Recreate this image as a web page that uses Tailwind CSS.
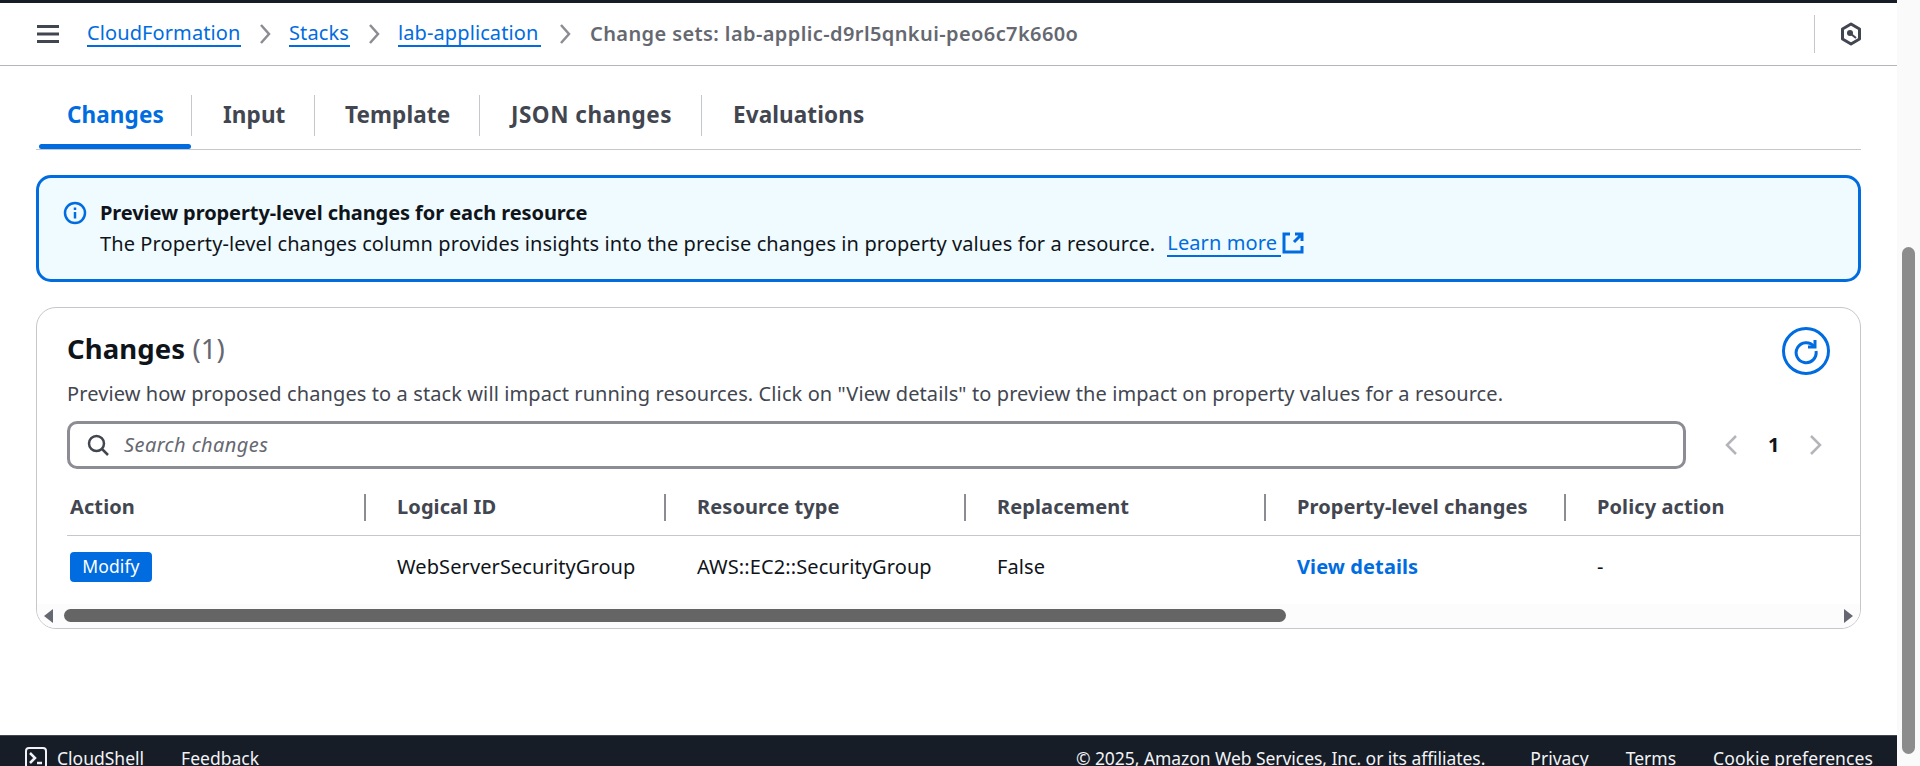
<!DOCTYPE html>
<html lang="en">
<head>
  <meta charset="UTF-8" />
  <title>Change sets - CloudFormation</title>
  <script src="https://cdn.jsdelivr.net/npm/@tailwindcss/browser@4"></script>
</head>
<body class="h-[766px] overflow-hidden bg-white font-['Noto_Sans',sans-serif] text-[#0f141a] text-[20px] tracking-[0.1px]">
<div class="flex h-[766px]">
  <div class="flex flex-col w-[1897px] h-full">

    <!-- Top nav -->
    <header class="flex items-center h-[65.5px] border-t-[3px] border-t-[#161d26] border-b-[1.5px] border-b-[#b4b4bb] shrink-0">
      <svg class="ml-[37px] mr-[28px]" width="22" height="18" viewBox="0 0 22 18" fill="#424650">
        <rect y="0" width="22" height="3" /><rect y="7.5" width="22" height="3" /><rect y="15" width="22" height="3" />
      </svg>
      <a class="text-[#006ce0] border-b-2 border-[#006ce0] leading-[24px] w-[154px] whitespace-nowrap" href="#">CloudFormation</a>
      <svg class="mx-[18px]" width="12" height="22" viewBox="0 0 12 22" fill="none" stroke="#8c8c94" stroke-width="2.5"><path d="M2 2l8 9-8 9" /></svg>
      <a class="text-[#006ce0] border-b-2 border-[#006ce0] leading-[24px] w-[61px]" href="#">Stacks</a>
      <svg class="mx-[18px]" width="12" height="22" viewBox="0 0 12 22" fill="none" stroke="#8c8c94" stroke-width="2.5"><path d="M2 2l8 9-8 9" /></svg>
      <a class="text-[#006ce0] border-b-2 border-[#006ce0] leading-[24px] w-[143px] whitespace-nowrap" href="#">lab-application</a>
      <svg class="ml-[18px] mr-[19px]" width="12" height="22" viewBox="0 0 12 22" fill="none" stroke="#8c8c94" stroke-width="2.5"><path d="M2 2l8 9-8 9" /></svg>
      <span class="font-semibold text-[#656871] whitespace-nowrap tracking-[0.4px] mt-[1px]">Change sets: lab-applic-d9rl5qnkui-peo6c7k660o</span>
      <div class="ml-auto flex items-center h-[38px] border-l border-[#c6c6cd] pl-[25px] pr-[35px]">
        <svg width="22" height="24" viewBox="0 0 22 24" fill="none" stroke="#424650">
          <path d="M11 2l8.5 5v10L11 22l-8.5-5V7z" stroke-width="3" stroke-linejoin="round" />
          <circle cx="10" cy="11" r="3" fill="#424650" stroke="none" />
          <path d="M11 12l5 4" stroke-width="2" />
        </svg>
      </div>
    </header>

    <main class="flex-1 px-[36px]">
      <!-- Tabs -->
      <nav class="flex items-end h-[84px] border-b-[1.5px] border-[#c6c6cd] pb-[13px] text-[#424650] font-bold text-[22.5px] whitespace-nowrap">
        <div class="relative flex items-center w-[156px] h-[41px] pl-[31px] border-r border-[#c6c6cd] text-[#006ce0]">
          Changes
          <span class="absolute left-[3px] right-0 bottom-[-13px] h-[5px] rounded-full bg-[#006ce0]"></span>
        </div>
        <div class="flex items-center w-[123px] h-[41px] pl-[31px] border-r border-[#c6c6cd]">Input</div>
        <div class="flex items-center w-[165px] h-[41px] pl-[30px] border-r border-[#c6c6cd]">Template</div>
        <div class="flex items-center w-[222px] h-[41px] pl-[31px] border-r border-[#c6c6cd] tracking-[0.5px]">JSON changes</div>
        <div class="flex items-center h-[41px] pl-[31px]">Evaluations</div>
      </nav>

      <!-- Info alert -->
      <section class="flex mt-[25px] h-[107px] bg-[#f0fbff] border-[3px] border-[#006ce0] rounded-[15px] pl-[24px] pt-[20px]">
        <svg class="mt-[3px] mr-[13px] shrink-0" width="24" height="24" viewBox="0 0 24 24" fill="none" stroke="#006ce0">
          <circle cx="12" cy="12" r="10" stroke-width="2.5" />
          <path d="M12 11v6.5" stroke-width="2.5" /><path d="M12 6.5v2.5" stroke-width="2.5" />
        </svg>
        <div class="leading-[30px]">
          <div class="font-bold tracking-[-0.08px]">Preview property-level changes for each resource</div>
          <div class="flex items-center mt-[1px]">
            The Property-level changes column provides insights into the precise changes in property values for a resource.
            <a class="ml-[12px] text-[#006ce0] border-b-2 border-[#006ce0] leading-[24px] w-[114px] whitespace-nowrap" href="#">Learn more</a>
            <svg class="ml-[1px] mb-[2px]" width="22" height="22" viewBox="0 0 22 22" fill="none" stroke="#006ce0" stroke-width="3"><path d="M8 2H2v18h18v-6M20 9V2h-7M20 2l-8 8" /></svg>
          </div>
        </div>
      </section>

      <!-- Changes table container -->
      <section class="relative mt-[25px] h-[322px] border border-[#c6c6cd] rounded-[20px] overflow-hidden">
        <div class="flex items-start justify-between pl-[30px] pr-[30px] pt-[19px]">
          <h2 class="text-[27.5px] font-bold leading-[44px]">Changes <span class="font-normal text-[#656871]">(1)</span></h2>
          <button class="flex items-center justify-center w-[48px] h-[48px] rounded-full border-[3px] border-[#006ce0]">
            <svg width="28" height="28" viewBox="0 0 28 28" fill="none" stroke="#006ce0" stroke-width="3"><path d="M22 9.5A10 10 0 1 0 24 14" /><path d="M23 3v7h-7" /></svg>
          </button>
        </div>
        <p class="pl-[30px] mt-[4px] leading-[30px] text-[#424650] whitespace-nowrap">Preview how proposed changes to a stack will impact running resources. Click on "View details" to preview the impact on property values for a resource.</p>
        <div class="flex items-center pl-[30px] mt-[12px]">
          <div class="flex items-center w-[1619px] h-[48px] border-[3px] border-[#8c8c94] rounded-[10px] pl-[17px]">
            <svg width="22" height="22" viewBox="0 0 22 22" fill="none" stroke="#424650" stroke-width="2.5"><circle cx="9.5" cy="9.5" r="7.5" /><path d="M15 15l6 6" /></svg>
            <span class="ml-[15px] italic text-[#656871] tracking-[0.4px]">Search changes</span>
          </div>
          <div class="flex items-center ml-[38px]">
            <svg width="14" height="22" viewBox="0 0 14 22" fill="none" stroke="#b4b4bb" stroke-width="2.5"><path d="M12 2l-9 9 9 9" /></svg>
            <span class="ml-[30px] font-bold w-[41px]">1</span>
            <svg width="14" height="22" viewBox="0 0 14 22" fill="none" stroke="#b4b4bb" stroke-width="2.5"><path d="M2 2l9 9-9 9" /></svg>
          </div>
        </div>
        <!-- Table -->
        <div class="ml-[30px] mt-[11px] grid grid-cols-[299px_300px_300px_300px_300px_294px] h-[56px] items-center border-b-[1.5px] border-[#c6c6cd] font-bold text-[#424650] whitespace-nowrap">
          <div class="flex items-center pl-[3px] h-[27px] border-r-[2.5px] border-[#8c8c94]">Action</div>
          <div class="flex items-center pl-[31px] h-[27px] border-r-[2.5px] border-[#8c8c94]">Logical ID</div>
          <div class="flex items-center pl-[31px] h-[27px] border-r-[2.5px] border-[#8c8c94]">Resource type</div>
          <div class="flex items-center pl-[31px] h-[27px] border-r-[2.5px] border-[#8c8c94]">Replacement</div>
          <div class="flex items-center pl-[31px] h-[27px] border-r-[2.5px] border-[#8c8c94]">Property-level changes</div>
          <div class="flex items-center pl-[31px] h-[27px]">Policy action</div>
        </div>
        <div class="ml-[30px] grid grid-cols-[299px_300px_300px_300px_300px_294px] h-[62px] items-center whitespace-nowrap">
          <div class="pl-[3px]"><span class="inline-flex items-center justify-center w-[82px] h-[30px] rounded-[4px] bg-[#006ce0] text-white text-[17.5px]">Modify</span></div>
          <div class="pl-[31px]">WebServerSecurityGroup</div>
          <div class="pl-[31px]">AWS::EC2::SecurityGroup</div>
          <div class="pl-[31px]">False</div>
          <div class="pl-[31px] font-bold text-[#006ce0]">View details</div>
          <div class="pl-[31px]">-</div>
        </div>
        <!-- Horizontal scrollbar of the table -->
        <div class="absolute left-0 right-0 bottom-0 flex items-center h-[24px] bg-[#fcfcfc]">
          <svg class="ml-[7px]" width="9" height="14" viewBox="0 0 9 14" fill="#656871"><path d="M9 0v14L0 7z" /></svg>
          <div class="ml-[11px] w-[1222px] h-[13px] rounded-full bg-[#656565]"></div>
          <svg class="ml-auto mr-[7px]" width="9" height="14" viewBox="0 0 9 14" fill="#656871"><path d="M0 0v14l9-7z" /></svg>
        </div>
      </section>
    </main>

    <!-- Footer, cut off at the window edge -->
    <footer class="flex items-start h-[31px] shrink-0 overflow-hidden bg-[#161d26] border-t border-[#414750] pt-[10px] text-[#f3f3f7] text-[17.5px] tracking-normal leading-[24px] whitespace-nowrap">
      <svg class="ml-[25px] mr-[10px] mt-[1px] shrink-0" width="22" height="22" viewBox="0 0 22 22" fill="none" stroke="#f3f3f7" stroke-width="2"><rect x="1" y="1" width="20" height="20" rx="3" /><path d="M5 6l5 5-5 5" stroke-width="2.5" /><path d="M12 16h5" stroke-width="2.5" /></svg>
      <span>CloudShell</span>
      <span class="ml-[37px]">Feedback</span>
      <span class="ml-auto tracking-[-0.05px]">© 2025, Amazon Web Services, Inc. or its affiliates.</span>
      <span class="ml-[45px]">Privacy</span>
      <span class="ml-[37px]">Terms</span>
      <span class="ml-[37px] mr-[24px] tracking-[0.1px]">Cookie preferences</span>
    </footer>
  </div>

  <!-- Page scrollbar -->
  <div class="w-[23px] h-full bg-[#fafafa] pl-[5px] pt-[247px]">
    <div class="w-[13px] h-[507px] rounded-full bg-[#8c8c8c]"></div>
  </div>
</div>
</body>
</html>
